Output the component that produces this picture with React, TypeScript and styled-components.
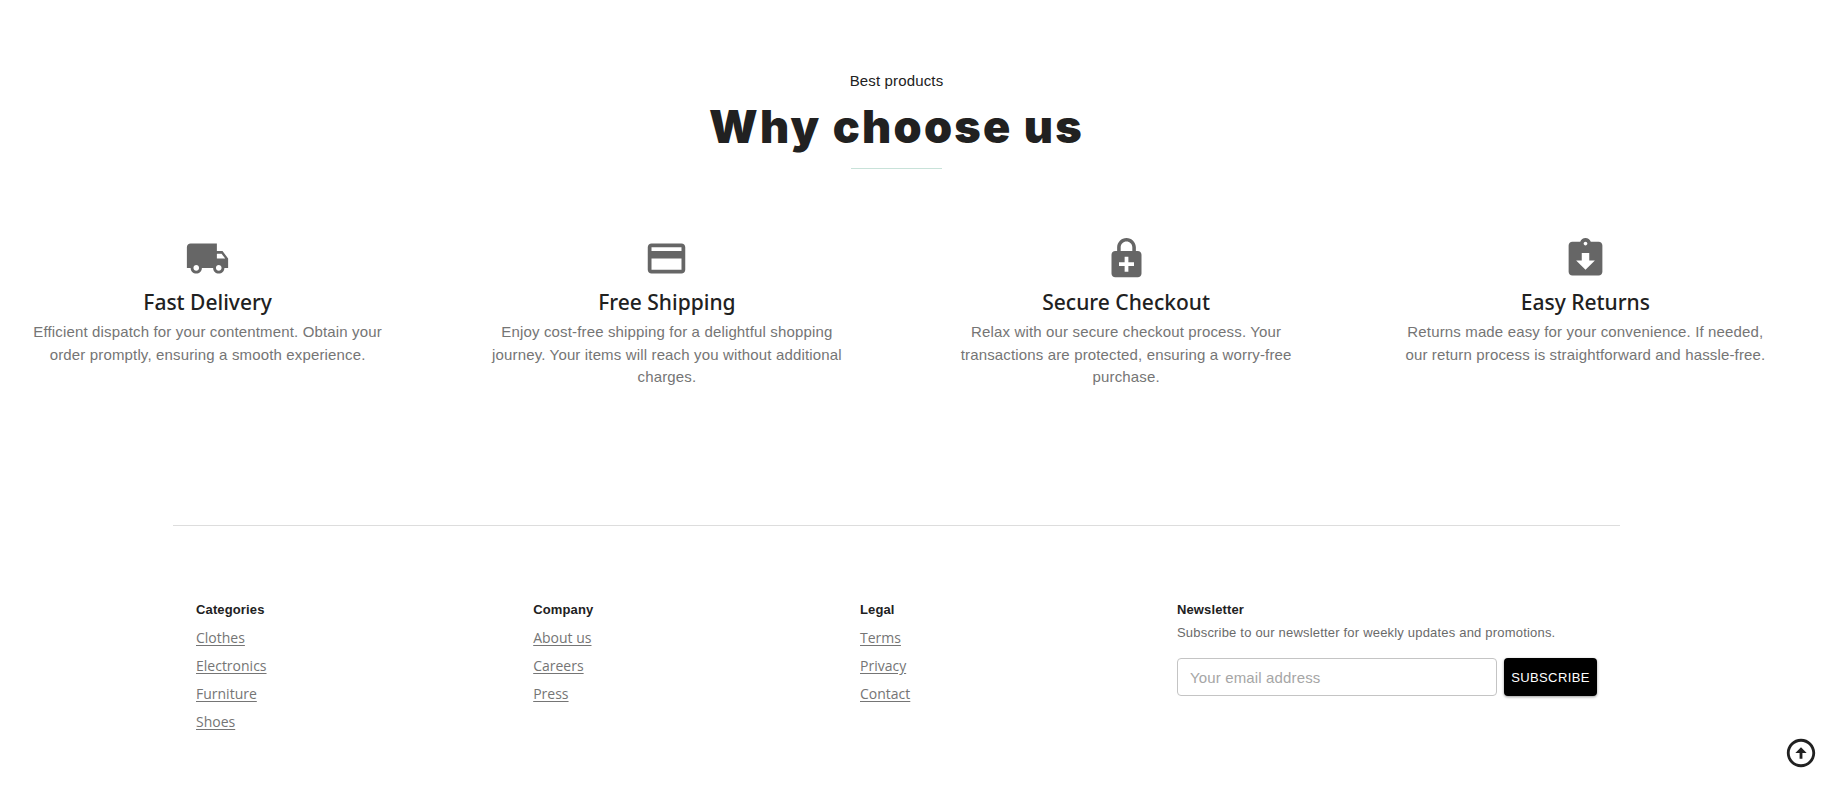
import React from 'react';
import styled, { createGlobalStyle } from 'styled-components';
import {
  MdLocalShipping,
  MdCreditCard,
  MdEnhancedEncryption,
  MdAssignmentReturned,
} from 'react-icons/md';

const sans = '"Liberation Sans", Arial, sans-serif';
const humanist = '"Open Sans", "Noto Sans", sans-serif';

const GlobalStyle = createGlobalStyle`
  *, *::before, *::after { box-sizing: border-box; }
  body { margin: 0; background: #fff; color: #212121; font-family: ${sans}; }
  h1, h2, h3, p, ul { margin: 0; padding: 0; }
`;

const Page = styled.div`
  padding-right: 31px;
`;

const WhySection = styled.section`
  padding: 70px 22px 0;
`;

const SectionHead = styled.header`
  display: flex;
  flex-direction: column;
  align-items: center;
`;

const Eyebrow = styled.p`
  font-size: 15px;
  line-height: 22px;
  letter-spacing: 0.01em;
`;

const Heading = styled.h1`
  margin-top: 5px;
  font-family: Inter, sans-serif;
  font-size: 45px;
  font-weight: 900;
  line-height: 60px;
  letter-spacing: 0.05em;
`;

const Accent = styled.span`
  width: 91px;
  height: 1px;
  margin-top: 11px;
  background: #c8e2d9;
`;

const FeatureGrid = styled.div`
  display: grid;
  grid-template-columns: repeat(4, minmax(0, 1fr));
  column-gap: 88px;
  margin-top: 67px;
  min-height: 289px;
`;

const Feature = styled.article`
  display: flex;
  flex-direction: column;
  align-items: center;
  text-align: center;

  svg {
    width: 45px;
    height: 45px;
    color: #666;
  }
`;

const FeatureTitle = styled.h2`
  margin-top: 3px;
  font-family: "Noto Sans", "Open Sans", sans-serif;
  font-size: 21px;
  font-weight: 500;
  line-height: 36px;
`;

const FeatureText = styled.p`
  margin-top: 1px;
  font-size: 15px;
  line-height: 1.5;
  letter-spacing: 0.01em;
  color: #757575;
`;

const Footer = styled.footer`
  width: calc(100% - 346px);
  margin: 0 auto;
  border-top: 1px solid #ddd;
`;

const FooterRow = styled.div`
  display: flex;
  justify-content: space-between;
  padding: 74px 23px 56px;
`;

const FooterTitle = styled.h3`
  font-size: 13px;
  font-weight: 700;
  line-height: 20px;
  letter-spacing: 0.01em;
`;

const LinkList = styled.ul`
  display: flex;
  flex-direction: column;
  margin-top: 4px;
  list-style: none;
`;

const LinkItem = styled.li`
  line-height: 28px;
`;

const FooterLink = styled.a`
  font-family: ${humanist};
  font-size: 14px;
  color: #757575;
  text-decoration: underline;
  text-underline-offset: 2px;
`;

const Newsletter = styled.form`
  width: 420px;
`;

const Hint = styled.label`
  display: block;
  margin-top: 3px;
  font-size: 13px;
  line-height: 20px;
  letter-spacing: 0.015em;
  color: #6a6a6a;
`;

const FieldRow = styled.div`
  display: flex;
  gap: 7px;
  margin-top: 15px;
`;

const EmailInput = styled.input`
  flex: 1;
  min-width: 0;
  height: 38px;
  padding: 0 12px;
  border: 1px solid #c4c4c4;
  border-radius: 4px;
  background: #fff;
  font-family: ${sans};
  font-size: 15px;
  letter-spacing: 0.01em;

  &::placeholder {
    color: #a6a6a6;
    opacity: 1;
  }
`;

const SubscribeButton = styled.button`
  width: 93px;
  height: 38px;
  padding: 0;
  border: 0;
  border-radius: 4px;
  background: #000;
  color: #fff;
  font-family: ${sans};
  font-size: 13px;
  letter-spacing: 0.03em;
  box-shadow: 0 1px 3px rgba(0, 0, 0, 0.4);
  cursor: pointer;
`;

const ScrollTop = styled.button`
  position: fixed;
  right: 6px;
  bottom: 18px;
  width: 34px;
  height: 34px;
  padding: 0;
  border: 0;
  background: none;
  color: #212121;
  cursor: pointer;

  svg {
    display: block;
    width: 34px;
    height: 34px;
    fill: currentColor;
  }
`;

const features = [
  {
    icon: <MdLocalShipping />,
    title: 'Fast Delivery',
    text: 'Efficient dispatch for your contentment. Obtain your order promptly, ensuring a smooth experience.',
  },
  {
    icon: <MdCreditCard />,
    title: 'Free Shipping',
    text: 'Enjoy cost-free shipping for a delightful shopping journey. Your items will reach you without additional charges.',
  },
  {
    icon: <MdEnhancedEncryption />,
    title: 'Secure Checkout',
    text: 'Relax with our secure checkout process. Your transactions are protected, ensuring a worry-free purchase.',
  },
  {
    icon: <MdAssignmentReturned />,
    title: 'Easy Returns',
    text: 'Returns made easy for your convenience. If needed, our return process is straightforward and hassle-free.',
  },
];

const linkGroups = [
  { title: 'Categories', links: ['Clothes', 'Electronics', 'Furniture', 'Shoes'] },
  { title: 'Company', links: ['About us', 'Careers', 'Press'] },
  { title: 'Legal', links: ['Terms', 'Privacy', 'Contact'] },
];

export default function App() {
  return (
    <>
      <GlobalStyle />
      <Page>
        <WhySection>
          <SectionHead>
            <Eyebrow>Best products</Eyebrow>
            <Heading>Why choose us</Heading>
            <Accent />
          </SectionHead>
          <FeatureGrid>
            {features.map((f) => (
              <Feature key={f.title}>
                {f.icon}
                <FeatureTitle>{f.title}</FeatureTitle>
                <FeatureText>{f.text}</FeatureText>
              </Feature>
            ))}
          </FeatureGrid>
        </WhySection>
        <Footer>
          <FooterRow>
            {linkGroups.map((group) => (
              <nav key={group.title} aria-label={group.title}>
                <FooterTitle>{group.title}</FooterTitle>
                <LinkList>
                  {group.links.map((link) => (
                    <LinkItem key={link}>
                      <FooterLink href="#">{link}</FooterLink>
                    </LinkItem>
                  ))}
                </LinkList>
              </nav>
            ))}
            <Newsletter onSubmit={(e) => e.preventDefault()}>
              <FooterTitle>Newsletter</FooterTitle>
              <Hint htmlFor="email">
                Subscribe to our newsletter for weekly updates and promotions.
              </Hint>
              <FieldRow>
                <EmailInput id="email" type="email" placeholder="Your email address" />
                <SubscribeButton type="submit">SUBSCRIBE</SubscribeButton>
              </FieldRow>
            </Newsletter>
          </FooterRow>
        </Footer>
      </Page>
      <ScrollTop
        type="button"
        aria-label="Back to top"
        onClick={() => window.scrollTo({ top: 0, behavior: 'smooth' })}
      >
        <svg viewBox="0 0 24 24" aria-hidden="true">
          <path d="M12 20c-4.41 0-8-3.59-8-8s3.59-8 8-8 8 3.59 8 8-3.59 8-8 8m0 2c5.52 0 10-4.48 10-10S17.52 2 12 2 2 6.48 2 12s4.48 10 10 10zm-1-10v4h2v-4h3l-4-4-4 4h3z" />
        </svg>
      </ScrollTop>
    </>
  );
}
